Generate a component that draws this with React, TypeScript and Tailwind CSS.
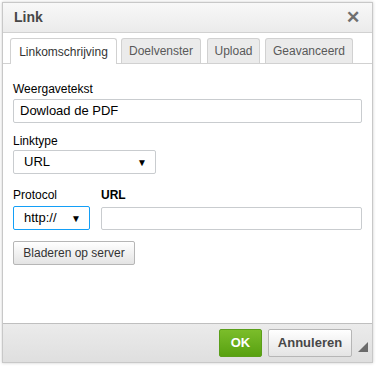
export default function App() {
    return (
        <div className="w-[377px] h-[366px] bg-white pt-[2px] pl-[2px] font-['Liberation_Sans',Arial,sans-serif] text-[12px] text-[#333]">
            <div className="w-[371px] h-[361px] flex flex-col border border-[#c8c8c8] bg-white shadow-[0_0_3px_rgba(0,0,0,0.2)]">
                {/* title */}
                <div className="h-[30px] flex items-center justify-between px-[11px] bg-gradient-to-b from-[#f8f8f8] to-[#ebebeb] border-b border-[#d1d1d1]">
                    <span className="font-bold text-[14px] text-[#474747]">Link</span>
                    <span className="text-[#6f6f6f] font-bold text-[17px] leading-none mr-[1px]">✕</span>
                </div>
                {/* tabs */}
                <div className="flex items-end pl-[7px] pt-[5px] border-b border-[#d1d1d1] bg-white">
                    <div className="h-[26px] w-[107px] flex items-center justify-center bg-white border border-b-0 border-[#d1d1d1] rounded-t-[3px] text-[#333] -mb-px">Linkomschrijving</div>
                    <div className="ml-[4px] h-[25px] w-[80px] flex items-center justify-center bg-[#ebebeb] border border-b-0 border-[#d1d1d1] rounded-t-[3px] text-[#595959]">Doelvenster</div>
                    <div className="ml-[6px] h-[25px] w-[53px] flex items-center justify-center bg-[#ebebeb] border border-b-0 border-[#d1d1d1] rounded-t-[3px] text-[#595959]">Upload</div>
                    <div className="ml-[5px] h-[25px] w-[88px] flex items-center justify-center bg-[#ebebeb] border border-b-0 border-[#d1d1d1] rounded-t-[3px] text-[#595959]">Geavanceerd</div>
                </div>
                {/* body */}
                <div className="flex-1 flex flex-col px-[10px] pt-[17px]">
                    <label className="leading-[16px] text-[#000]">Weergavetekst</label>
                    <div className="mt-[2px] h-[24px] w-[349px] border border-[#c9cccf] rounded-[2px] flex items-center px-[6px] text-[13px] text-[#000]">Dowload de PDF</div>
                    <label className="mt-[10px] leading-[16px] text-[#000]">Linktype</label>
                    <div className="mt-[1px] h-[24px] w-[143px] border border-[#c9cccf] rounded-[2px] flex items-center justify-between pl-[10px] pr-[8px] text-[13px] text-[#000]">
                        <span>URL</span>
                        <span className="text-[10px]">▼</span>
                    </div>
                    <div className="mt-[13px] flex gap-[11px]">
                        <div className="flex flex-col">
                            <label className="leading-[16px] text-[#000]">Protocol</label>
                            <div className="mt-[3px] h-[24px] w-[77px] border border-[#139ff7] rounded-[2px] flex items-center justify-between pl-[10px] pr-[8px] text-[13px] text-[#000]">
                                <span>http://</span>
                                <span className="text-[10px]">▼</span>
                            </div>
                        </div>
                        <div className="flex flex-col">
                            <label className="leading-[16px] font-bold text-[#000]">URL</label>
                            <div className="mt-[4px] h-[23px] w-[261px] border border-[#c9cccf] rounded-[2px]" />
                        </div>
                    </div>
                    <div className="mt-[11px] h-[24px] w-[122px] flex items-center justify-center border border-[#b6b6b6] rounded-[2px] bg-gradient-to-b from-[#fff] to-[#e4e4e4] text-[12px] text-[#333]">Bladeren op server</div>
                </div>
                {/* footer */}
                <div className="h-[39px] flex items-center justify-end gap-[6px] pr-[20px] bg-gradient-to-b from-[#ebebeb] to-[#dfdfdf] border-t border-[#bfbfbf] relative">
                    <div className="h-[28px] w-[43px] flex items-center justify-center rounded-[2px] border border-[#5a9e1a] bg-gradient-to-b from-[#7bbd2a] to-[#58a10f] text-white font-bold text-[13px]">OK</div>
                    <div className="h-[28px] w-[84px] flex items-center justify-center rounded-[2px] border border-[#b6b6b6] bg-gradient-to-b from-[#fff] to-[#e4e4e4] text-[#474747] font-bold text-[13px]">Annuleren</div>
                    <div className="absolute right-[4px] bottom-[10px] w-0 h-0 border-l-[10px] border-l-transparent border-b-[10px] border-b-[#6b6b6b]" />
                </div>
            </div>
        </div>
    )
}
